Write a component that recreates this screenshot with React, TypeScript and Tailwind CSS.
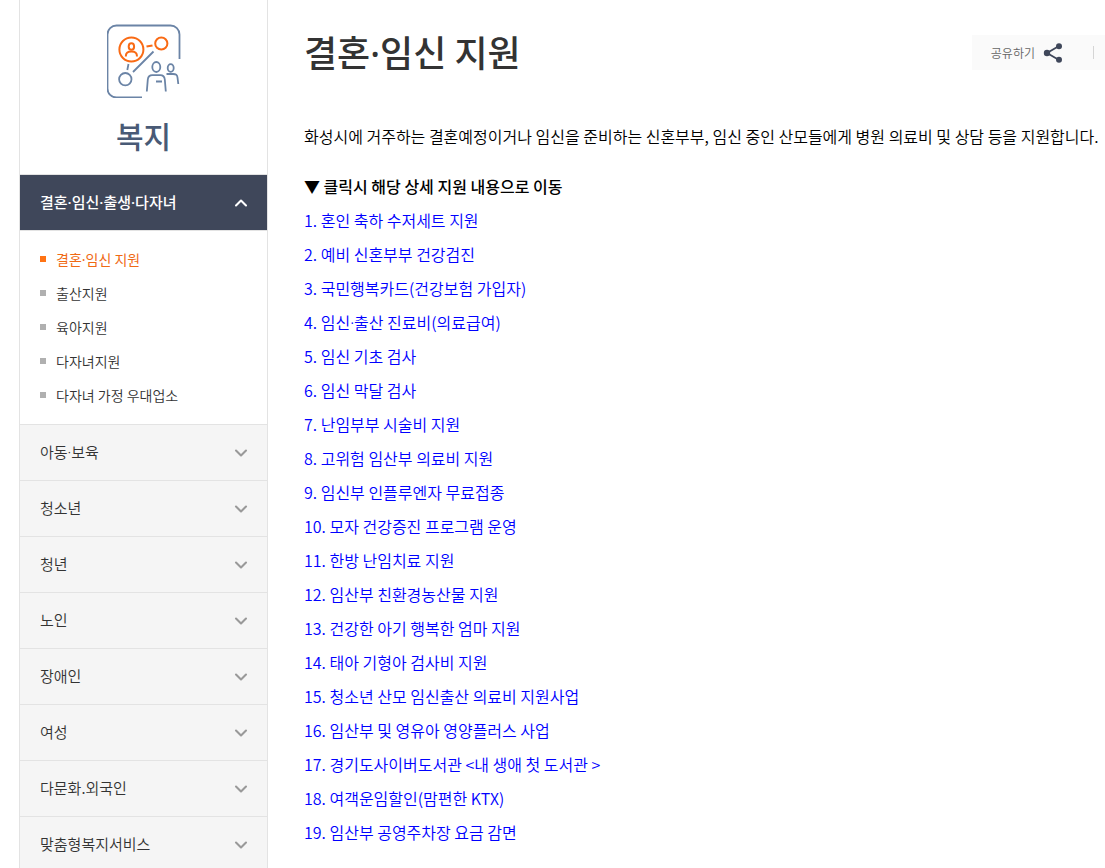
import React from "react";
import { ChevronDown, ChevronUp } from "lucide-react";

const subMenu = [
  "결혼·임신 지원",
  "출산지원",
  "육아지원",
  "다자녀지원",
  "다자녀 가정 우대업소",
];

const categories = [
  "아동·보육",
  "청소년",
  "청년",
  "노인",
  "장애인",
  "여성",
  "다문화.외국인",
  "맞춤형복지서비스",
];

const supports = [
  "혼인 축하 수저세트 지원",
  "예비 신혼부부 건강검진",
  "국민행복카드(건강보험 가입자)",
  "임신·출산 진료비(의료급여)",
  "임신 기초 검사",
  "임신 막달 검사",
  "난임부부 시술비 지원",
  "고위험 임산부 의료비 지원",
  "임신부 인플루엔자 무료접종",
  "모자 건강증진 프로그램 운영",
  "한방 난임치료 지원",
  "임산부 친환경농산물 지원",
  "건강한 아기 행복한 엄마 지원",
  "태아 기형아 검사비 지원",
  "청소년 산모 임신출산 의료비 지원사업",
  "임산부 및 영유아 영양플러스 사업",
  "경기도사이버도서관 <내 생애 첫 도서관 >",
  "여객운임할인(맘편한 KTX)",
  "임산부 공영주차장 요금 감면",
];

// The CJK middle dot is too wide between words, so it is set in the Latin face
const Label = ({ text }: { text: string }) => (
  <span>
    {text.split("·").map((part, i) => (
      <React.Fragment key={i}>
        {i > 0 && <span className="font-['Noto_Sans',sans-serif] leading-none">·</span>}
        {part}
      </React.Fragment>
    ))}
  </span>
);

const WelfareIcon = ({ className }: { className?: string }) => (
  <svg
    viewBox="0 0 74 74"
    fill="none"
    stroke="#6b84a6"
    strokeWidth="1.8"
    className={className}
    aria-hidden="true"
  >
    <path d="M35 73.500H9.500a9 9 0 0 1-9-9V10.500a9 9 0 0 1 9-9h54a9 9 0 0 1 9 9V35" />
    <circle cx="18.300" cy="55.200" r="6.200" />
    <path d="M20.300 46l1.200-6M26 48l20.500-20.500" />
    <ellipse cx="49.300" cy="43" rx="4" ry="5" />
    <path d="M39.800 67.500l1-12c.4-3.300 1.500-4.300 4.500-4.300h8c3 0 4.100 1 4.500 4.300l1 12M49 57.500h6" />
    <ellipse cx="63.700" cy="44" rx="3" ry="3.800" />
    <path d="M59.500 50h6.500c3.300 0 4.200.8 4.500 3.500l.8 6.500" />
    <g stroke="#f96a14" strokeWidth="2">
      <circle cx="24.400" cy="25.500" r="12" />
      <circle cx="54.300" cy="19.500" r="6.100" />
      <path d="M39.500 22.600l6-1.200" />
      <ellipse cx="24.400" cy="22.500" rx="2.700" ry="3.300" />
      <path d="M18.800 32.500c0-3.700 1.500-4.900 5.600-4.900s5.600 1.200 5.600 4.900" />
    </g>
  </svg>
);

const ShareIcon = ({ className }: { className?: string }) => (
  <svg viewBox="0 0 20 20" fill="#3f475a" className={className} aria-hidden="true">
    <path d="M16 3L4 10l12 7" fill="none" stroke="#3f475a" strokeWidth="1.800" />
    <circle cx="4" cy="10" r="3.200" />
    <circle cx="16" cy="3.200" r="3" />
    <circle cx="16" cy="16.800" r="3" />
  </svg>
);

const App: React.FC = () => {
  return (
    <div className="flex h-screen items-start overflow-hidden bg-white pl-[19px] font-['Noto_Sans_CJK_KR',sans-serif] text-black">
      {/* Side menu */}
      <aside className="w-[249px] shrink-0 border-x border-[#e3e3e3]">
        <div className="flex h-[174px] flex-col items-center pt-6">
          <WelfareIcon className="size-[74px]" />
          <h2 className="mt-4 text-[30px] leading-[42px] font-medium text-[#495a76]">
            복지
          </h2>
        </div>

        <nav>
          <button
            type="button"
            className="flex h-14 w-full items-center justify-between border-t border-[#e3e3e3] bg-[#3f475a] pr-4 pl-5 text-[15px] font-medium text-white"
          >
            <Label text="결혼·임신·출생·다자녀" />
            <ChevronUp size={20} strokeWidth={2.5} />
          </button>
          <ul className="border-t border-[#e3e3e3] px-5 pt-[11px] pb-3 text-sm">
            {subMenu.map((item, i) => (
              <li key={item}>
                <a
                  href="#"
                  className={
                    i === 0
                      ? "flex h-[34px] items-center gap-[10px] text-[#f06a14]"
                      : "flex h-[34px] items-center gap-[10px] font-[350] text-[#333]"
                  }
                >
                  <span
                    className={i === 0 ? "size-[6px] bg-[#ff7314]" : "size-[6px] bg-[#b0b0b0]"}
                  />
                  <Label text={item} />
                </a>
              </li>
            ))}
          </ul>
          {categories.map((item) => (
            <button
              key={item}
              type="button"
              className="flex h-14 w-full items-center justify-between border-t border-[#e3e3e3] bg-[#f5f5f5] pr-4 pl-5 text-[15px] font-[350] text-[#333]"
            >
              <Label text={item} />
              <ChevronDown size={20} strokeWidth={2.5} className="text-[#999]" />
            </button>
          ))}
        </nav>
      </aside>

      {/* Page content */}
      <main className="min-w-0 flex-1 pl-9">
        <header className="flex items-start justify-between">
          <h1 className="pt-6 text-4xl leading-[54px] font-medium text-[#333]">
            <Label text="결혼·임신 지원" />
          </h1>
          <div className="mt-[35px] flex h-[35px] items-center bg-[#fafafa] pr-[11px] pl-[19px]">
            <button type="button" className="flex items-center gap-2 text-xs font-[350] text-[#666]">
              공유하기
              <ShareIcon className="size-5" />
            </button>
            <span className="ml-[30px] h-[13px] w-px bg-[#d5d5d5]" />
          </div>
        </header>

        <p className="mt-[41px] leading-[34px] font-[350] whitespace-nowrap">
          화성시에 거주하는 결혼예정이거나 임신을 준비하는 신혼부부, 임신 중인 산모들에게 병원 의료비 및 상담 등을 지원합니다.
        </p>
        <p className="mt-4 leading-[34px] font-medium">▼ 클릭시 해당 상세 지원 내용으로 이동</p>
        <ul className="leading-[34px] font-[350] text-[#0000ff]">
          {supports.map((item, i) => (
            <li key={item}>
              <a href="#">
                {i + 1}. <Label text={item} />
              </a>
            </li>
          ))}
        </ul>
      </main>
    </div>
  );
};

export default App;
